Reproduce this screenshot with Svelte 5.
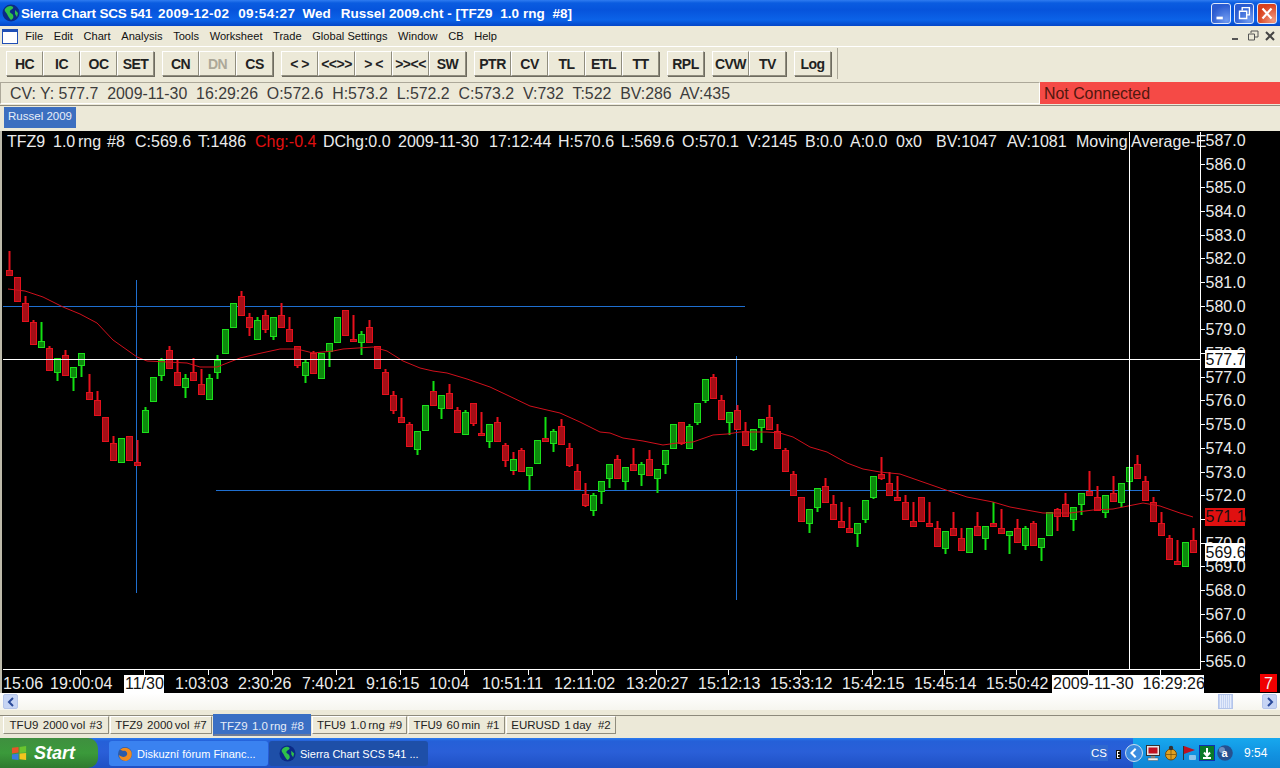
<script>
  const raw = [
    ['r',251,270,275,275],['r',277,277,301,301],['r',296,303,321,321],['r',320,322,344,344],['g',322,341,347,347],
    ['r',346,348,370,370],['g',358,358,372,381],['r',350,355,375,375],['g',367,367,377,391],['g',353,353,365,377],
    ['r',374,392,399,399],['r',391,400,415,415],['r',417,417,441,441],['r',436,443,460,460],['g',438,438,462,462],
    ['r',436,436,460,460],['r',440,462,465,465],['g',407,410,432,432],['g',377,377,401,401],['g',358,360,375,381],
    ['r',346,350,368,368],['r',360,372,385,385],['g',374,378,387,398],['r',358,372,380,381],['r',369,384,394,394],
    ['g',374,378,399,399],['g',355,360,372,379],['g',329,329,353,353],['g',303,303,327,327],['r',291,296,315,315],
    ['r',313,317,327,336],['g',317,320,339,340],['r',310,315,329,333],['g',317,317,336,340],['r',303,315,327,327],
    ['r',317,329,341,341],['r',346,346,365,368],['g',360,362,375,383],['r',351,353,373,373],['g',353,353,378,378],
    ['g',343,343,351,367],['g',317,317,342,342],['r',310,310,335,335],['r',315,339,340,340],['g',331,334,342,355],
    ['r',320,327,342,342],['r',346,346,368,368],['r',369,372,394,394],['r',391,395,410,414],['r',398,417,422,422],
    ['r',422,424,446,446],['g',431,431,449,455],['g',405,405,430,430],['r',381,391,405,405,'g'],['g',395,395,408,419],
    ['r',384,393,408,408],['r',407,410,432,432],['g',410,412,434,434],['r',403,403,423,426],['r',412,433,434,436],
    ['g',424,424,441,448],['r',417,422,441,441],['r',443,445,460,467],['g',452,459,470,475,'r'],['r',448,450,471,471],
    ['g',467,467,475,490],['g',440,440,463,463],['r',417,438,441,441,'g'],['g',429,431,443,452],['r',419,426,444,444],
    ['r',443,448,465,467],['r',464,471,489,489],['r',483,494,505,507],['g',493,495,510,516],['g',481,481,491,504],
    ['g',464,464,478,488],['r',455,459,478,478],['g',467,467,481,490],['r',448,464,470,470],['g',462,464,474,486],
    ['r',450,459,475,475],['g',469,469,478,493],['g',450,450,464,474],['g',424,424,448,448],['r',422,422,443,445],
    ['g',424,426,448,448],['g',403,403,422,425],['g',379,379,400,403],['r',374,377,398,398],['r',395,400,419,419],
    ['g',412,412,422,435],['r',405,410,429,429],['r',422,431,445,445],['g',429,429,449,451],['g',419,419,427,443],
    ['r',405,417,429,429],['r',424,431,448,448],['r',448,450,471,471],['r',471,474,495,495],['r',497,497,521,521],
    ['g',509,509,523,533],['g',488,488,507,512],['r',478,486,502,502],['r',495,504,519,519],['r',502,521,527,527],
    ['r',507,528,532,532],['g',523,523,533,547],['g',500,500,519,523],['g',476,476,497,499],['r',457,474,478,480],
    ['r',472,483,495,495],['r',476,497,500,500],['r',495,502,519,519],['r',502,521,526,526],['r',497,497,521,521],
    ['r',502,523,526,526],['r',521,528,546,546],['g',531,531,548,554],['r',512,528,535,535],['r',528,538,550,550],
    ['g',528,528,552,552],['r',512,526,535,535],['g',526,526,538,550],['r',502,523,526,526,'g'],['r',509,528,533,533],
    ['g',531,531,535,554],['r',519,528,542,542],['g',526,528,545,550],['r',521,523,545,545],['g',538,538,547,561],
    ['g',512,512,535,535],['r',508,509,516,531],['r',493,504,516,516],['g',507,507,519,531],['g',493,493,504,515],
    ['r',471,491,495,495],['r',486,497,510,510],['g',495,495,512,518],['r',476,493,501,501],['g',483,483,502,507],
    ['g',467,467,481,490],['r',455,464,478,478],['r',476,481,500,500],['r',497,502,521,521],['r',512,523,535,535],
    ['r',535,538,559,559],['r',540,561,564,564],['g',542,542,566,566],['r',528,540,552,552]
  ];
  const candles = raw.map((c, i) => ({ x: 9 + 8 * i, up: c[0] === 'g', hi: c[1], top: c[2], bot: c[3], lo: c[4], w: c[5] || c[0] }));
  const ma = '8,289 25,291 43,297 63,307 80,314 97,323 113,340 137,357 147,361 187,363 200,367 217,367 240,358 257,354 280,349 297,349 313,353 333,351 343,349 373,347 387,351 403,361 420,368 433,371 447,373 467,379 490,387 507,395 530,406 547,410 560,413 580,422 600,432 610,433 623,438 643,441 663,445 677,443 693,442 713,435 727,434 740,432 767,432 780,433 793,437 810,447 827,452 847,463 863,469 880,472 900,474 920,481 943,489 967,497 993,502 1010,507 1043,513 1070,513 1093,510 1113,509 1143,503 1160,506 1180,513 1193,517';
  const prices = Array.from({ length: 23 }, (_, i) => 587 - i);
  const priceY = (p) => 140 + (587 - p) * 23.68;
  const header = [
    ['TFZ9',7],['1.0',53],['rng',78],['#8',107],['C:569.6',135],['T:1486',198],['Chg:-0.4',255,true],['DChg:0.0',323],
    ['2009-11-30',398],['17:12:44',489],['H:570.6',558],['L:569.6',621],['O:570.1',682],['V:2145',747],['B:0.0',805],
    ['A:0.0',850],['0x0',896],['BV:1047',936],['AV:1081',1007],['Moving',1076],['Average-E',1131]
  ];
  const times = [
    ['15:06',3],['19:00:04',50],['1:03:03',175],['2:30:26',238],['7:40:21',302],['9:16:15',366],['10:04',429],['10:51:11',482],['12:11:02',554],['13:20:27',626],['15:12:13',698],['15:33:12',770],['15:42:15',842],['15:45:14',914],['15:50:42',986]
  ];
  const ticks = [80,144,208,272,336,400,464,528,592,656,728,800,872,944,1016,1088,1160];
  const menus = ['File','Edit','Chart','Analysis','Tools','Worksheet','Trade','Global Settings','Window','CB','Help'];
  const tools = [
    [['HC'],['IC'],['OC'],['SET']],
    [['CN'],['DN',true],['CS']],
    [['< >'],['<<>>'],['> <'],['>><<'],['SW']],
    [['PTR'],['CV'],['TL'],['ETL'],['TT']],
    [['RPL']],
    [['CVW'],['TV']],
    [['Log']]
  ];
  const tabs = [['TFU9  2000 vol  #3',106],['TFZ9  2000 vol  #7',102],['TFZ9  1.0 rng  #8',98],['TFU9  1.0 rng  #9',95],['TFU9  60 min   #1',97],['EURUSD  1 day   #2',110]];
</script>

<div class="app">
  <header class="title">
    <svg class="globe" viewBox="0 0 18 18" width="18" height="18"><circle cx="9" cy="9" r="8.500" fill="#0b2a86"/><path d="M3 5c2-3 6-4 8-2 1 2-2 2-3 4s2 2 3 4 0 4-2 5c-2-2-3-4-4-6S2 7 3 5zM13 6l3 3-1 4-2-3z" fill="#2fc04a"/></svg>
    <span class="title-text t1">Sierra Chart SCS 541</span>
    <span class="title-text t2">2009-12-02</span>
    <span class="title-text t3">09:54:27</span>
    <span class="title-text t4">Wed</span>
    <span class="title-text t5">Russel 2009.cht - [TFZ9  1.0 rng  #8]</span>
    <div class="winbtns">
      <span class="wb"><svg viewBox="0 0 20 21"><rect x="5" y="14" width="7" height="3" fill="#fff"/></svg></span>
      <span class="wb"><svg viewBox="0 0 20 21"><path d="M8 7V4h8v8h-3M5 8h8v8H5z" fill="none" stroke="#fff" stroke-width="1.500"/></svg></span>
      <span class="wb close"><svg viewBox="0 0 20 21"><path d="M5 5l10 11M15 5L5 16" stroke="#fff" stroke-width="2.400"/></svg></span>
    </div>
  </header>

  <nav class="menu">
    <svg class="docicon" viewBox="0 0 16 15" width="16" height="15"><rect x=".5" y=".5" width="15" height="14" fill="#fff" stroke="#1f4fb5"/><rect x="0" y="0" width="16" height="3" fill="#1f4fb5"/></svg>
    {#each menus as m}<span class="mi">{m}</span>{/each}
    <div class="mdi">
      <svg viewBox="0 0 12 12" width="12" height="12"><rect x="2" y="8" width="6" height="2" fill="#555"/></svg>
      <svg viewBox="0 0 12 12" width="12" height="12"><path d="M4 3V1h7v6H8M1.500 4h6v6h-6z" fill="none" stroke="#555"/></svg>
      <svg viewBox="0 0 12 12" width="12" height="12"><path d="M2 2l8 8M10 2l-8 8" stroke="#444" stroke-width="2"/></svg>
    </div>
  </nav>

  <div class="toolbar">
    <div class="tool-inner">
      {#each tools as group}
        <div class="tgroup">
          {#each group as b}<span class="tb" class:dim={b[1]}>{b[0]}</span>{/each}
        </div>
      {/each}
    </div>
  </div>

  <div class="status">
    <div class="cv">CV: Y: 577.7  2009-11-30  16:29:26  O:572.6  H:573.2  L:572.2  C:573.2  V:732  T:522  BV:286  AV:435</div>
    <div class="conn">Not Connected</div>
  </div>

  <div class="sheets"><span class="sheet">Russel 2009</span></div>

  <div class="chart">
    <svg class="plot" width="1280" height="562" viewBox="0 131 1280 562">
      <rect x="0" y="131" width="1280" height="562" fill="#000"/>
      <rect x="0" y="131" width="2" height="562" fill="#bdbaaa"/>

      {#each header as h}
        <text class="lbl" class:chg={h[2]} x={h[1]} y="147">{h[0]}</text>
      {/each}

      <path d="M3 306.500H745M216 490.500H1160M136.500 280V593M736.500 356V600" stroke="#1f6fd0" fill="none"/>
      {#each candles as c}
        <path d="M{c.x + .5} {c.hi}V{c.lo}" stroke={c.w === 'g' ? '#12e012' : '#e8101c'} stroke-width="2"/>
        <rect x={c.x - 2.5} y={c.top + .5} width="6" height={Math.max(c.bot - c.top, 2)} fill={c.up ? '#0c8a0c' : '#a50e16'} stroke={c.up ? '#1be01b' : '#e4101c'}/>
      {/each}
      <polyline points={ma} fill="none" stroke="#d0101c"/>
      <path d="M3 359.500H1200M1129.500 132V669" stroke="#fff" fill="none"/>

      <path d="M1200.500 132V669.500H3" stroke="#fff" fill="none"/>
      {#each prices as p}
        <path d="M1200 {Math.round(priceY(p)) + .5}h5" stroke="#fff"/>
        <text class="lbl" x="1205.500" y={priceY(p) + 6}>{p.toFixed(1)}</text>
      {/each}
      {#each ticks as t}<path d="M{t + .5} 670v5" stroke="#fff"/>{/each}

      <rect x="1205" y="350" width="40" height="18" fill="#fff"/>
      <text class="lbl dark" x="1205.500" y="365">577.7</text>
      <rect x="1205" y="508" width="40" height="18" fill="#e01010"/>
      <text class="lbl dark" x="1205.500" y="522">571.1</text>
      <rect x="1205" y="543" width="40" height="18" fill="#fff"/>
      <text class="lbl dark" x="1205.500" y="558">569.6</text>

      {#each times as t}<text class="lbl" x={t[1]} y="689">{t[0]}</text>{/each}
      <rect x="124" y="675" width="40" height="18" fill="#fff"/>
      <text class="lbl dark" x="125" y="689">11/30</text>
      <rect x="1052" y="675" width="152" height="18" fill="#fff"/>
      <text class="lbl dark" x="1053" y="689" xml:space="preserve">2009-11-30  16:29:26</text>
      <rect x="1260" y="674" width="17" height="18" fill="#f00000"/>
      <text class="lbl" x="1264" y="689">7</text>
    </svg>
  </div>

  <div class="hscroll">
    <span class="sb"><svg viewBox="0 0 10 12" width="10" height="12"><path d="M7 2L3 6l4 4" fill="none" stroke="#2a4a9a" stroke-width="2"/></svg></span>
    <span class="thumb"></span>
    <span class="sb right"><svg viewBox="0 0 10 12" width="10" height="12"><path d="M3 2l4 4-4 4" fill="none" stroke="#2a4a9a" stroke-width="2"/></svg></span>
  </div>

  <div class="tabs">
    {#each tabs as t, i}<span class="tab" class:active={i === 2} style="width:{t[1]}px">{t[0]}</span>{/each}
  </div>

  <footer class="taskbar">
    <div class="start">
      <svg viewBox="0 0 18 18" width="17" height="17"><path d="M1 3l7-1v6l-7 1z" fill="#e8552a"/><path d="M9 2l7-1v7l-7 .5z" fill="#6ac42f"/><path d="M1 10l7-1v7l-7-1z" fill="#3a7be0"/><path d="M9 9l7-.5V16l-7-1z" fill="#f2c51e"/></svg>
      <span>Start</span>
    </div>
    <div class="task first">
      <svg viewBox="0 0 16 16" width="16" height="16"><circle cx="8" cy="8" r="7" fill="#2b5aa8"/><path d="M3 4c3-3 8-3 11 1 2 4 0 9-5 10-4 0-7-3-7-6 2 2 6 3 8 0 1-3-2-5-4-4-1-1-2-1-3-1z" fill="#ef8b1f"/></svg>
      <span>Diskuzní fórum Financ...</span>
    </div>
    <div class="task on">
      <svg viewBox="0 0 18 18" width="17" height="17"><circle cx="9" cy="9" r="8.500" fill="#0b2a86"/><path d="M3 5c2-3 6-4 8-2 1 2-2 2-3 4s2 2 3 4 0 4-2 5c-2-2-3-4-4-6S2 7 3 5zM13 6l3 3-1 4-2-3z" fill="#2fc04a"/></svg>
      <span>Sierra Chart SCS 541 ...</span>
    </div>
    <div class="lang">CS</div>
    <svg class="mini" viewBox="0 0 5 9" width="5" height="9"><rect width="5" height="9" fill="#111"/><path d="M1.500 1.500h2M1.500 4.500h2M1.500 7.500h2M1.500 1v7" stroke="#fff"/></svg>
    <div class="tray">
      <span class="chev"><svg viewBox="0 0 12 14" width="10" height="12"><path d="M8 2L3 7l5 5" fill="none" stroke="#fff" stroke-width="2.500"/></svg></span>
      <svg viewBox="0 0 16 16" width="16" height="16"><rect x="1.500" y=".5" width="13" height="10" fill="#e6e6e6" stroke="#333"/><rect x="3.500" y="2.500" width="9" height="6" fill="#c01020"/><rect x="6" y="11" width="4" height="2" fill="#888"/><rect x="3" y="13" width="10" height="2.500" fill="#eee" stroke="#555" stroke-width=".5"/></svg>
      <svg viewBox="0 0 16 16" width="16" height="16"><ellipse cx="8" cy="9.500" rx="5.500" ry="5.500" fill="#e0a020" stroke="#6a4a10"/><path d="M8 4v11M3 9.500h10" stroke="#6a4a10" stroke-width=".7"/><circle cx="8" cy="3" r="2.200" fill="#333"/></svg>
      <svg viewBox="0 0 16 16" width="16" height="16"><path d="M2.500 1v14" stroke="#333"/><path d="M3 1l11 4-11 4z" fill="#c01020"/><rect x="8" y="10" width="7" height="5" rx="1" fill="#8ec4ea"/></svg>
      <svg viewBox="0 0 16 16" width="16" height="16"><rect x=".5" y=".5" width="15" height="15" fill="#0a7a28" stroke="#1030b0"/><path d="M8 3v7M5 7.500L8 11l3-3.500M4 13h8" stroke="#fff" stroke-width="2" fill="none"/></svg>
      <svg viewBox="0 0 16 16" width="16" height="16"><circle cx="8" cy="8" r="7.800" fill="#26508f"/><circle cx="5" cy="5" r="3" fill="#6d8dbd"/><text x="4.500" y="12" class="a">a</text></svg>
      <span class="clock">9:54</span>
    </div>
  </footer>
</div>

<style>
  :global(body) { margin: 0; background: #ece9d8; }
  .app { width: 1280px; height: 768px; overflow: hidden; display: flex; flex-direction: column; font-family: "Liberation Sans", Arial, sans-serif; background: #ece9d8; }

  .title { height: 26px; flex: none; display: flex; align-items: center; padding-left: 2px; box-sizing: border-box; background: linear-gradient(#2f7cf0 0, #0a5ce0 3px, #0654dc 10px, #0b63e8 20px, #0446c8 100%); }
  .globe { flex: none; }
  .title-text { color: #fff; font-weight: 700; font-size: 13.500px; white-space: pre; }
  .t1 { margin-left: 1px; letter-spacing: -.2px; }
  .t2 { margin-left: 6px; letter-spacing: .2px; }
  .t3 { margin-left: 9px; letter-spacing: .4px; }
  .t4 { margin-left: 7px; }
  .t5 { margin-left: 10px; letter-spacing: .05px; }
  .winbtns { margin-left: auto; display: flex; gap: 3px; padding-right: 3px; }
  .wb { width: 20px; height: 21px; border-radius: 3px; border: 1px solid #dfe8fa; background: radial-gradient(circle at 80% 85%, #6f9af0, #2a5bd0 70%); display: block; box-sizing: border-box; }
  .wb svg { display: block; width: 100%; height: 100%; }
  .close { background: radial-gradient(circle at 85% 85%, #f09a80, #d8401c 70%); }

  .menu { height: 20px; flex: none; display: flex; align-items: center; background: #ece9d8; font-size: 11.100px; color: #111; border-bottom: 1px solid #fff; }
  .docicon { margin: 0 2px 0 2px; flex: none; }
  .mi { padding: 0 5.300px; }
  .mdi { margin-left: auto; display: flex; gap: 5px; padding-right: 4px; }

  .toolbar { height: 32px; flex: none; padding: 1px 0 0 3px; box-sizing: border-box; display: flex; }
  .tool-inner { display: flex; gap: 8px; padding: 0 6px 0 3px; height: 31px; border-right: 1px solid #aca899; box-sizing: border-box; }
  .tgroup { display: flex; padding-top: 3px; }
  .tb { width: 37px; height: 25px; box-sizing: border-box; display: flex; align-items: center; justify-content: center; font-weight: 700; font-size: 14px; letter-spacing: -.5px; color: #222; white-space: pre; background: #ece9d8; border: 1px solid; border-color: #fff #8f8c7d #8f8c7d #fff; box-shadow: 1px 1px 0 #6e6b60; }
  .tb.dim { color: #aca899; }

  .status { height: 22px; flex: none; margin: 3px 0 0; display: flex; font-size: 15.900px; color: #3c3c3c; white-space: pre; }
  .cv { flex: 1; padding-left: 9px; border: 1px solid #fff; border-color: #aca899 #fff #fff #aca899; line-height: 21px; box-sizing: border-box; }
  .conn { width: 240px; background: #f54a46; color: #50180f; padding-left: 4px; line-height: 23px; box-sizing: border-box; }

  .sheets { height: 24px; flex: none; margin-top: 1px; padding-left: 4px; border-top: 1px solid #8d8a7c; box-sizing: border-box; }
  .sheet { display: block; height: 21px; width: 72px; margin-top: 1px; background: #3c6fc0; color: #e8eef8; font-size: 11.500px; line-height: 19px; text-align: center; white-space: nowrap; }

  .chart { flex: none; height: 562px; margin-top: 2px; overflow: hidden; }
  .plot { display: block; }
  .lbl { fill: #ececec; font-size: 16px; font-family: "Liberation Sans", sans-serif; }
  .chg { fill: #e01010; }
  .dark { fill: #111; }

  .hscroll { height: 17px; flex: none; background: linear-gradient(#fff, #f6f5ee); position: relative; display: flex; align-items: center; padding: 0 3px; box-sizing: border-box; }
  .sb { width: 15px; height: 15px; display: flex; align-items: center; justify-content: center; background: #c6d4f4; border-radius: 2px; border: 1px solid #b5c5ea; box-sizing: border-box; }
  .thumb { position: absolute; right: 47px; top: 1px; width: 15px; height: 15px; background: repeating-linear-gradient(90deg, #c3d2f2 0 1px, #e4ebfb 1px 2px); border: 1px solid #b3c4ea; box-sizing: border-box; }
  .right { margin-left: auto; }

  .tabs { height: 28px; flex: none; display: flex; padding: 0 0 0 3px; box-sizing: border-box; font-size: 11.500px; word-spacing: -1px; align-items: flex-start; background: linear-gradient(#ece9d8 5px, #8d8a7c 5px, #8d8a7c 6px, #ece9d8 6px); }
  .tab { height: 18px; margin-top: 6px; margin-right: 1px; line-height: 17px; text-align: center; color: #222; white-space: pre; border: 1px solid; border-color: #fff #8f8c7d #8f8c7d #fff; box-sizing: border-box; flex: none; }
  .tab.active { background: #3a6fc4; color: #e6edf8; height: 22px; margin-top: 4px; line-height: 23px; border-color: #3a6fc4; border-bottom: 2px solid #6a7a9a; }

  .taskbar { height: 30px; flex: none; display: flex; align-items: stretch; background: linear-gradient(#2a7cf0 0, #2560d8 3px, #2a5fd8 14px, #1f50c4 100%); color: #fff; font-size: 11px; }
  .start { width: 98px; display: flex; align-items: center; gap: 6px; padding-left: 11px; box-sizing: border-box; background: linear-gradient(#3f8f3f, #3b9a3b 50%, #2f7a2f); border-radius: 0 10px 10px 0; font: italic 700 18px "Liberation Sans", sans-serif; }
  .task { width: 159px; margin: 3px 0 2px 1px; display: flex; align-items: center; gap: 4px; padding-left: 8px; box-sizing: border-box; background: #3a82f0; border-radius: 3px; white-space: pre; }
  .task.first { margin-left: 11px; }
  .task.on { background: #1e4fa8; padding-left: 10px; }
  .lang { margin-left: auto; align-self: center; padding: 2px 1px; background: #2f68cf; font-size: 11.500px; }
  .mini { align-self: center; margin: 2px 12px 0 8px; flex: none; }
  .tray { width: 147px; display: flex; align-items: center; gap: 2px; background: linear-gradient(#17a8ee, #1190df 60%, #0f86d4); box-sizing: border-box; flex: none; }
  .chev { width: 18px; height: 18px; margin-left: -8px; border-radius: 50%; background: #3a8ce0; border: 1px solid #cde; display: flex; align-items: center; justify-content: center; box-sizing: border-box; flex: none; }
  .clock { margin-left: 9px; font-size: 12px; }
  .a { fill: #fff; font: 700 11px "Liberation Sans", sans-serif; }
</style>
